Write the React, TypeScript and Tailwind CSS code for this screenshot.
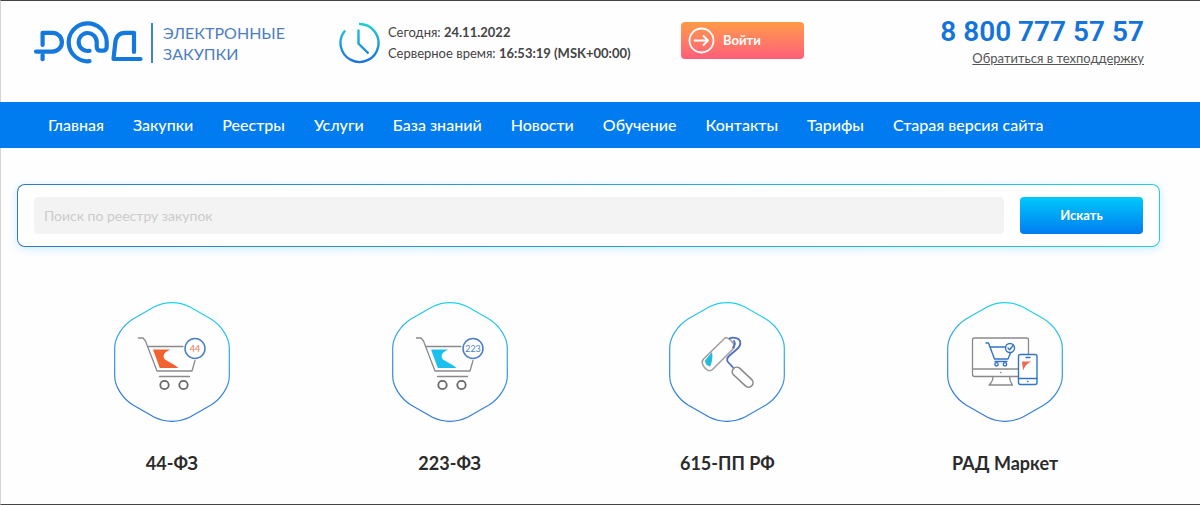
import type { ReactNode } from 'react';

const NAV_ITEMS = [
  'Главная',
  'Закупки',
  'Реестры',
  'Услуги',
  'База знаний',
  'Новости',
  'Обучение',
  'Контакты',
  'Тарифы',
  'Старая версия сайта',
];

function Logo() {
  return (
    <svg className="w-[110px] h-[43px] shrink-0" viewBox="0 0 110 43" fill="none" stroke="#1478dc" strokeWidth="4.2" strokeLinecap="round" strokeLinejoin="round">
      <path d="M9.6 24V11.8H19.5a9.4 9.4 0 0 1 0 18.8H3" />
      <path d="M9.6 34v4.2" />
      <path d="M56.5 40.2A19 19 0 1 1 73.7 21v4.7c0 2.6-1.5 4-4 4h-2c-2.6 0-4-1.4-4-4V21a9 9 0 1 0-7.2 8.8" />
      <path d="M101 31V11.8H92c-6 0-9 3.5-9.7 10L80.5 38H107.5" />
    </svg>
  );
}

function ClockIcon() {
  return (
    <svg className="w-[42px] h-[42px] shrink-0" viewBox="0 0 42 42" fill="none" stroke="url(#clock)" strokeWidth="2.4">
      <defs>
        <linearGradient id="clock" gradientUnits="userSpaceOnUse" x1="0" y1="0" x2="0" y2="42">
          <stop stopColor="#1fd2d2" />
          <stop offset="1" stopColor="#1a6fe0" />
        </linearGradient>
      </defs>
      <path d="M21 2a19 19 0 1 1-13.8 6.5M20.5 7.5V21.5l10 10" />
    </svg>
  );
}

function Hexagon({ id, children }: { id: string; children: ReactNode }) {
  return (
    <svg className="w-[116px] h-[120px]" viewBox="0 0 116 120" fill="none" strokeLinecap="round" strokeLinejoin="round">
      <defs>
        <linearGradient id={id} x1="0.6" y1="0" x2="0.4" y2="1">
          <stop stopColor="#22d3f0" />
          <stop offset="0.6" stopColor="#3a8ee0" />
          <stop offset="1" stopColor="#2f78d8" />
        </linearGradient>
      </defs>
      <path
        stroke={`url(#${id})`}
        strokeWidth="1.2"
        d="M58 .7C66 .7 72 3 76 5L97 17C108 24 115.3 36 115.3 46V74C115.3 84 108 96 97 103L76 115C72 117 66 119.3 58 119.3S44 117 40 115L19 103C8 96 .7 84 .7 74V46C.7 36 8 24 19 17L40 5C44 3 50 .7 58 .7Z"
      />
      {children}
    </svg>
  );
}

function CartIcon({ label, flag, labelColor }: { label: string; flag: string; labelColor: string }) {
  return (
    <>
      <g stroke="#8a8a8a" strokeWidth="1.3">
        <path d="M24.5 36H29l2.5 3L43 69H78l3-10.5M34.5 44.5H69M45.5 74.5H75.5" />
        <circle cx="50.5" cy="83" r="4.2" stroke="#666" strokeWidth="1.8" />
        <circle cx="69.5" cy="83" r="4.2" stroke="#666" strokeWidth="1.8" />
      </g>
      <path fill={flag} d="M39 47.5H56.5C50 50 48 54 51 57.5C54.5 60 60 62 64.5 66H45.8Z" />
      <circle cx="81" cy="46.5" r="10" fill="#fff" stroke="#4b7fc4" strokeWidth="1.5" />
      <text x="81" y="49.5" textAnchor="middle" fontSize="9" fill={labelColor}>{label}</text>
    </>
  );
}

function RollerIcon() {
  return (
    <>
      <path stroke="#a39a9e" strokeWidth="1.5" d="M56 36L34.5 57c-2.5 3-1 6 1 8.500s5 4.500 8 2L65 46c2-3-5.500-11.500-9-10Z" />
      <path fill="#20bcd8" d="M43 50L36 58.500c0 3 1.500 5 5 6C43 61 44 55 43 50Z" />
      <path stroke="#4b6fc0" strokeWidth="1.8" d="M60.500 36.500c4-2 10.500-.5 10.800 4c.3 3-1.3 5-4.3 7.500l-7 6c-2 2-2.5 4-1 6l5 5.500M65 39c1.500 3 1 4-1 6.500" />
      <rect x="61" y="71" width="25" height="9" rx="4.500" transform="rotate(43 74 75.5)" stroke="#8a8a8a" strokeWidth="1.6" />
    </>
  );
}

function MarketIcon() {
  return (
    <>
      <g stroke="#8a8a8a" strokeWidth="1.3">
        <rect x="25.5" y="36" width="56" height="38.5" rx="2" />
        <path d="M25.5 67H81M53.5 70.5h.5M46 74.5c0 4-1 6-4 8.5H65.5c-2-2.5-3-4.5-3-8.5" />
      </g>
      <g stroke="#3474c4" strokeWidth="1.4">
        <path d="M39 41h2.5l6 16H61l2.5-6M43.5 45H58M48 59.5H60" />
        <circle cx="49.5" cy="62.3" r="1.7" />
        <circle cx="58" cy="62.3" r="1.7" />
        <circle cx="63" cy="46" r="4.5" fill="#fff" />
        <path d="M61 46l1.7 1.8L66 43.5" />
        <rect x="71.5" y="52.5" width="18.5" height="30" rx="2" fill="#fff" />
        <path d="M79 55.5h4M71.5 76.5H90M80.5 79.5h.5" />
      </g>
      <path fill="#ec6a50" d="M75 59.5H84.5C80 61.5 78 64 76 68.5Z" />
    </>
  );
}

const SECTIONS = [
  { title: '44-ФЗ', icon: <CartIcon label="44" flag="#f2622e" labelColor="#ee7748" /> },
  { title: '223-ФЗ', icon: <CartIcon label="223" flag="#1cc0ee" labelColor="#4b7fc4" /> },
  { title: '615-ПП РФ', icon: <RollerIcon /> },
  { title: 'РАД Маркет', icon: <MarketIcon /> },
];

export default function App() {
  return (
    <div className="min-h-screen flex flex-col bg-[#fefefe] border-y border-l border-t-[#444] border-b-[#444] border-l-[#d4d4d4] text-[#2b2b2b] font-[Lato,'Open_Sans',sans-serif]">
      {/* Header */}
      <header className="flex items-start pl-8 pr-14 pt-[15px] h-[101px]">
        <a href="#" className="flex items-center gap-2 w-[305px] pt-[5px] shrink-0">
          <Logo />
          <span className="border-l-2 border-[#3d84cc] h-10 flex items-center pl-[10px] text-base leading-[21px] text-[#4d7dc4]">
            ЭЛЕКТРОННЫЕ
            <br />
            ЗАКУПКИ
          </span>
        </a>

        <div className="flex items-center gap-2 w-[343px] pt-[6px] shrink-0">
          <ClockIcon />
          <div className="text-[13px] leading-[21px] whitespace-nowrap text-[#444]">
            <p>Сегодня: <b className="font-bold">24.11.2022</b></p>
            <p>Серверное время: <b className="font-bold">16:53:19 (MSK+00:00)</b></p>
          </div>
        </div>

        <button className="mt-[6px] w-[123px] h-[37px] flex items-center gap-2 pl-[7px] rounded bg-linear-to-b from-[#ff9a44] to-[#ff5c78] text-white text-[13px] font-bold">
          <svg className="w-[27px] h-[27px]" viewBox="0 0 27 27" fill="none" stroke="currentColor" strokeWidth="1.8" strokeLinecap="round" strokeLinejoin="round">
            <circle cx="13.5" cy="13.5" r="12" />
            <path d="M6.5 13.5H20M15.5 9l4.5 4.5-4.5 4.5" />
          </svg>
          Войти
        </button>

        <div className="ml-auto flex flex-col items-end whitespace-nowrap">
          <a href="tel:88007775757" className="font-[Roboto,sans-serif] text-[28px] leading-8 font-semibold text-[#1474dc]">8 800 777 57 57</a>
          <a href="#" className="text-[13px] leading-5 underline text-[#555]">Обратиться в техподдержку</a>
        </div>
      </header>

      {/* Navigation */}
      <nav className="-ml-px bg-[#007bf0] h-[46px] flex items-center gap-[29px] pl-12 text-base leading-6 font-medium text-white whitespace-nowrap">
        {NAV_ITEMS.map((item) => (
          <a key={item} href="#">{item}</a>
        ))}
      </nav>

      {/* Search */}
      <form className="mt-9 ml-4 mr-10 p-px rounded-lg bg-linear-to-r from-[#2f78c4] to-[#25cce0] shadow-[0_2px_10px_rgba(0,160,240,0.2)]">
        <div className="flex gap-4 px-4 py-3 rounded-[7px] bg-white">
          <input
            type="search"
            aria-label="Поиск по реестру закупок"
            placeholder="Поиск по реестру закупок"
            className="flex-1 min-w-0 h-[37px] px-[10px] rounded-sm bg-[#f3f3f3] text-sm placeholder:text-[#cbcbcb] outline-none"
          />
          <button type="button" className="w-[123px] h-[37px] rounded bg-linear-to-b from-[#00c8fa] to-[#007bf0] text-white text-[13px] font-bold">
            Искать
          </button>
        </div>
      </form>

      {/* Sections */}
      <main className="mt-[55px] pl-8 pr-14 grid grid-cols-4">
        {SECTIONS.map((section, index) => (
          <a key={section.title} href="#" className="flex flex-col items-center gap-[27px]">
            <Hexagon id={`hex-${index}`}>{section.icon}</Hexagon>
            <span className="text-lg leading-7 font-bold">{section.title}</span>
          </a>
        ))}
      </main>
    </div>
  );
}
